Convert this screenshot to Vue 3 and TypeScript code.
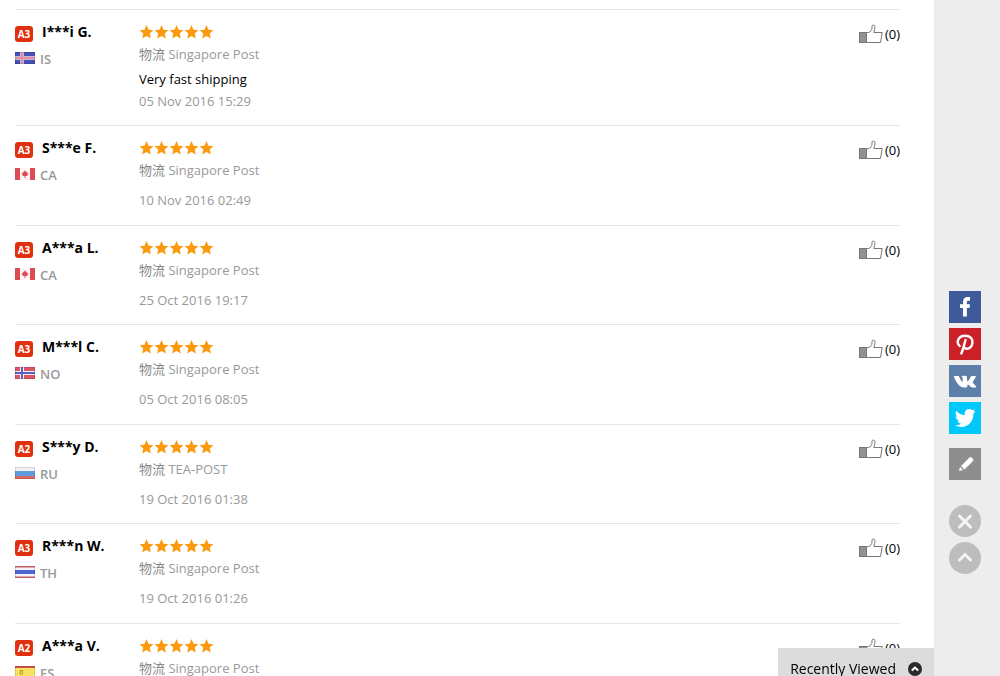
<script setup lang="ts">
interface Review {
  level: string
  name: string
  country: string
  carrier: string
  comment?: string
  date: string
}

const reviews: Review[] = [
  { level: 'A3', name: 'I***i G.', country: 'IS', carrier: 'Singapore Post', comment: 'Very fast shipping', date: '05 Nov 2016 15:29' },
  { level: 'A3', name: 'S***e F.', country: 'CA', carrier: 'Singapore Post', date: '10 Nov 2016 02:49' },
  { level: 'A3', name: 'A***a L.', country: 'CA', carrier: 'Singapore Post', date: '25 Oct 2016 19:17' },
  { level: 'A3', name: 'M***l C.', country: 'NO', carrier: 'Singapore Post', date: '05 Oct 2016 08:05' },
  { level: 'A2', name: 'S***y D.', country: 'RU', carrier: 'TEA-POST', date: '19 Oct 2016 01:38' },
  { level: 'A3', name: 'R***n W.', country: 'TH', carrier: 'Singapore Post', date: '19 Oct 2016 01:26' },
  { level: 'A2', name: 'A***a V.', country: 'ES', carrier: 'Singapore Post', date: '' },
]
</script>

<template>
  <div class="page">
    <main class="content">
      <ul class="reviews">
        <li v-for="(r, i) in reviews" :key="i" class="review">
          <div class="author">
            <div class="who">
              <span class="badge">{{ r.level }}</span>
              <span class="name">{{ r.name }}</span>
            </div>
            <div class="place">
              <svg class="flag" viewBox="0 0 20 12" aria-hidden="true">
                <template v-if="r.country === 'IS'">
                  <rect width="20" height="12" fill="#4550b8" />
                  <path d="M0 6H20M7 0V12" stroke="#c9b4e0" stroke-width="4" />
                  <path d="M0 6H20M7 0V12" stroke="#e08f9c" stroke-width="2" />
                </template>
                <template v-else-if="r.country === 'CA'">
                  <rect width="20" height="12" fill="#fdf6f6" />
                  <path d="M0 0H5V12H0ZM15 0H20V12H15Z" fill="#dc4c52" />
                  <path d="M10 2L11 4L12 3.500V5.500L13.800 5L12 8H10.500V10H9.500V8H8L6.200 5L8 5.500V3.500L9 4Z" fill="#dc4c52" />
                </template>
                <template v-else-if="r.country === 'NO'">
                  <rect width="20" height="12" fill="#dc5560" />
                  <path d="M0 6H20M7 0V12" stroke="#f6eefa" stroke-width="4" />
                  <path d="M0 6H20M7 0V12" stroke="#5a60bd" stroke-width="2" />
                </template>
                <template v-else-if="r.country === 'RU'">
                  <rect width="20" height="12" fill="#f1f1f3" />
                  <rect y="4" width="20" height="5" fill="#5e9ede" />
                  <rect y="9" width="20" height="3" fill="#dd6a62" />
                </template>
                <template v-else-if="r.country === 'TH'">
                  <rect width="20" height="12" fill="#f6f2f6" />
                  <path d="M0 .8H20M0 11.200H20" stroke="#cc6468" stroke-width="1.600" />
                  <rect y="4" width="20" height="4" fill="#4a68cf" />
                </template>
                <template v-else>
                  <rect width="20" height="12" fill="#d4534b" />
                  <rect y="2" width="20" height="8" fill="#f8e35f" />
                  <path d="M5 4.500H8M5 5V8H8M7.500 5V7" stroke="#c98245" fill="none" />
                </template>
                <rect v-if="r.country !== 'CA'" x=".5" y=".5" width="19" height="11" fill="none" stroke="#000" stroke-opacity=".12" />
              </svg>
              <span>{{ r.country }}</span>
            </div>
          </div>
          <div class="body">
            <svg class="stars" viewBox="0 0 75 16" role="img" aria-label="5 stars">
              <path
                v-for="n in 5"
                :key="n"
                :transform="`translate(${(n - 1) * 15} 0)`"
                d="M7.500 1L9.500 5.700L14.400 6.200L10.700 9.600L11.800 14.600L7.500 12L3.200 14.600L4.300 9.600L.6 6.200L5.500 5.700Z"
                fill="#fb9a0e"
              />
            </svg>
            <p class="carrier"><span class="label">物流</span> {{ r.carrier }}</p>
            <p v-if="r.comment" class="comment">{{ r.comment }}</p>
            <p class="date" :class="{ spaced: !r.comment }">{{ r.date }}</p>
          </div>
          <button class="like" type="button" aria-label="Helpful (0)">
            <svg viewBox="0 0 24 20" width="24" height="20" aria-hidden="true">
              <rect x=".5" y="8.500" width="7" height="10" fill="#929292" stroke="#777" />
              <path d="M7.500 8.500H9.500C11.500 8 13 6 13 4V2C13 .8 16 .8 16 2.500C16 5 15.300 6.500 14.800 8.500H23.200L21.500 18.500H7.500Z" fill="#fff" stroke="#777" />
            </svg>
            <span>(0)</span>
          </button>
        </li>
      </ul>
    </main>

    <aside class="rail">
      <nav class="share" aria-label="Share">
        <a class="tile facebook" href="#" aria-label="Facebook">
          <svg viewBox="0 0 32 32"><path d="M14 25.500V17H11V13.200H14V10.800C14 7.600 15.800 6 18.500 6H21V9.700H19.300C18.200 9.700 17.900 10.300 17.900 11.300V13.200H21L20.500 17H17.900V25.500Z" fill="#fff" /></svg>
        </a>
        <a class="tile pinterest" href="#" aria-label="Pinterest">
          <svg viewBox="0 0 32 32"><path d="M10.700 18C6.500 14 9.500 7.700 16.200 7.700C21 7.700 23.800 10.500 23.500 14.300C23.200 18.500 20.500 21 17.700 20.700C16 20.500 15 19.500 14.800 18.500M16.500 12L13.500 22.500L12.300 25.500" fill="none" stroke="#fff" stroke-width="2.400" stroke-linecap="round" /></svg>
        </a>
        <a class="tile vk" href="#" aria-label="VK">
          <svg viewBox="0 0 32 32"><path d="M15.200 22.500C10.500 22.500 7.600 18 5 12.200C4.800 11.400 5.200 11 6 11H9C9.700 11 10 11.300 10.300 12C11.300 14.500 12.500 16.500 13.300 16.800C14 16.800 13.900 13.200 13.500 12.500C13.300 12 12.700 11.800 12.300 11.700C13 10.500 17.200 10.400 17.700 11.200C18.200 12.300 17.700 15.700 18.400 16.200C19.300 16.300 21 13.500 21.700 11.700C22 11.200 22.300 11 22.900 11H26C27.500 11 26.800 12.500 24.700 15.300C23.200 17.200 23.200 17.300 24.700 18.700C27.300 21.200 28.100 22.500 25.800 22.500H22.900C21.700 22.500 19.900 19.400 18.900 19.600C18.300 19.800 18.400 21 18.200 21.800C18 22.500 17 22.500 15.200 22.500Z" fill="#fff" /></svg>
        </a>
        <a class="tile twitter" href="#" aria-label="Twitter">
          <svg viewBox="0 0 32 32"><path d="M26.500 9.200L24.400 11.700C24.500 19.500 19 25 12.300 25C10.200 25 8.100 24.500 6.200 23.300C8.500 23.500 10.700 22.800 12.300 21.600C10.500 21.500 9 20.400 8.400 18.700H10.200C8.100 18.200 6.700 16.400 6.700 14.300L8.600 14.800C6.600 13.400 6 10.800 7.200 8.700C9.500 11.500 12.400 13 15.900 13.200C15.100 9.300 17.500 7 20 7C21.300 7 22.300 7.500 23.100 8.300L25.800 7.300L24.200 9.700Z" fill="#fff" /></svg>
        </a>
      </nav>
      <button class="tile edit" type="button" aria-label="Feedback">
        <svg viewBox="0 0 32 32"><path d="M10 23L11 19L14 22ZM12 18L20.500 9.500Q21.500 8.500 22.500 9.500L24 11Q25 12 24 13L15.500 21.500Z" fill="#fff" /></svg>
      </button>
      <div class="rounds">
        <button class="round" type="button" aria-label="Close">
          <svg viewBox="0 0 32 32"><path d="M10.500 11L21.500 22M21.500 11L10.500 22" stroke="#f5f5f5" stroke-width="3" stroke-linecap="round" /></svg>
        </button>
        <button class="round" type="button" aria-label="Back to top">
          <svg viewBox="0 0 32 32"><path d="M10.500 18L16 12.500L21.500 18" fill="none" stroke="#f5f5f5" stroke-width="3" stroke-linecap="round" /></svg>
        </button>
      </div>
    </aside>

    <button class="recent" type="button">
      <span>Recently Viewed</span>
      <svg viewBox="0 0 14 14" width="14" height="14" aria-hidden="true">
        <circle cx="7" cy="7" r="7" fill="#2b2b2b" />
        <path d="M3.800 8.500L7 5.500L10.200 8.500" fill="none" stroke="#fff" stroke-width="2" />
      </svg>
    </button>
  </div>
</template>

<style>
html,
body {
  margin: 0;
  height: 100%;
  overflow: hidden;
}
#app {
  height: 100%;
}
</style>

<style scoped>
.page {
  display: flex;
  height: 100%;
  overflow: hidden;
  background: #ededed;
  font: 13px/18px "Open Sans", "Noto Sans CJK SC", sans-serif;
  color: #000;
}
.page button {
  font: inherit;
  color: inherit;
  border: 0;
  padding: 0;
  cursor: pointer;
}
.content {
  flex: 1;
  min-width: 0;
  padding: 9px 34px 0 15px;
  background: #fff;
}
.reviews {
  list-style: none;
  margin: 0;
  padding: 0;
}
.review {
  display: flex;
  align-items: flex-start;
  border-top: 1px solid #e6e6e6;
  padding: 14px 0 15px;
}
.review:nth-child(even) {
  padding-bottom: 16px;
}
.author {
  width: 124px;
}
.who {
  display: flex;
  align-items: flex-end;
  gap: 9px;
  height: 18px;
}
.badge {
  width: 18px;
  height: 16px;
  border-radius: 3px;
  background: #e0300f;
  color: #fff;
  font: bold 10px/16px "Open Sans", sans-serif;
  text-align: center;
}
.name {
  font-size: 14px;
  font-weight: 700;
  line-height: 20px;
}
.place {
  display: flex;
  align-items: flex-start;
  gap: 5px;
  margin-top: 8px;
  color: #999;
  font-weight: 600;
}
.flag {
  width: 20px;
  height: 12px;
  margin-top: 2px;
}
.body {
  flex: 1;
}
.stars {
  display: block;
  width: 75px;
  height: 16px;
}
.body p {
  margin: 0;
  min-height: 18px;
}
.body .carrier {
  margin-top: 5px;
  color: #999;
}
.label {
  color: #888;
}
.body .comment {
  margin-top: 7px;
}
.body .date {
  margin-top: 4px;
  color: #999;
}
.body .spaced {
  margin-top: 12px;
}
.like {
  display: flex;
  align-items: center;
  gap: 2px;
  background: none;
}
.rail {
  display: flex;
  flex-direction: column;
  align-items: center;
  width: 66px;
  padding: 0 4px 102px 0;
  box-sizing: border-box;
  justify-content: flex-end;
}
.share {
  display: grid;
  gap: 5px;
}
.rail .tile,
.rail .round {
  display: block;
  width: 32px;
  height: 32px;
}
.rail svg {
  display: block;
}
.facebook {
  background: #3f5a9a;
}
.pinterest {
  background: #cb2028;
}
.vk {
  background: #5d80a9;
}
.twitter {
  background: #00c8fb;
}
.edit {
  margin-top: 14px;
  background: #8e8e8e;
}
.rounds {
  display: grid;
  gap: 5px;
  margin-top: 25px;
}
.round {
  border-radius: 50%;
  background: #bdbdbd;
}
.page .recent {
  position: fixed;
  right: 66px;
  bottom: 0;
  display: flex;
  align-items: center;
  gap: 12px;
  height: 28px;
  padding: 13px 12px 0;
  background: #dcdcdc;
  font-size: 14px;
}
</style>
